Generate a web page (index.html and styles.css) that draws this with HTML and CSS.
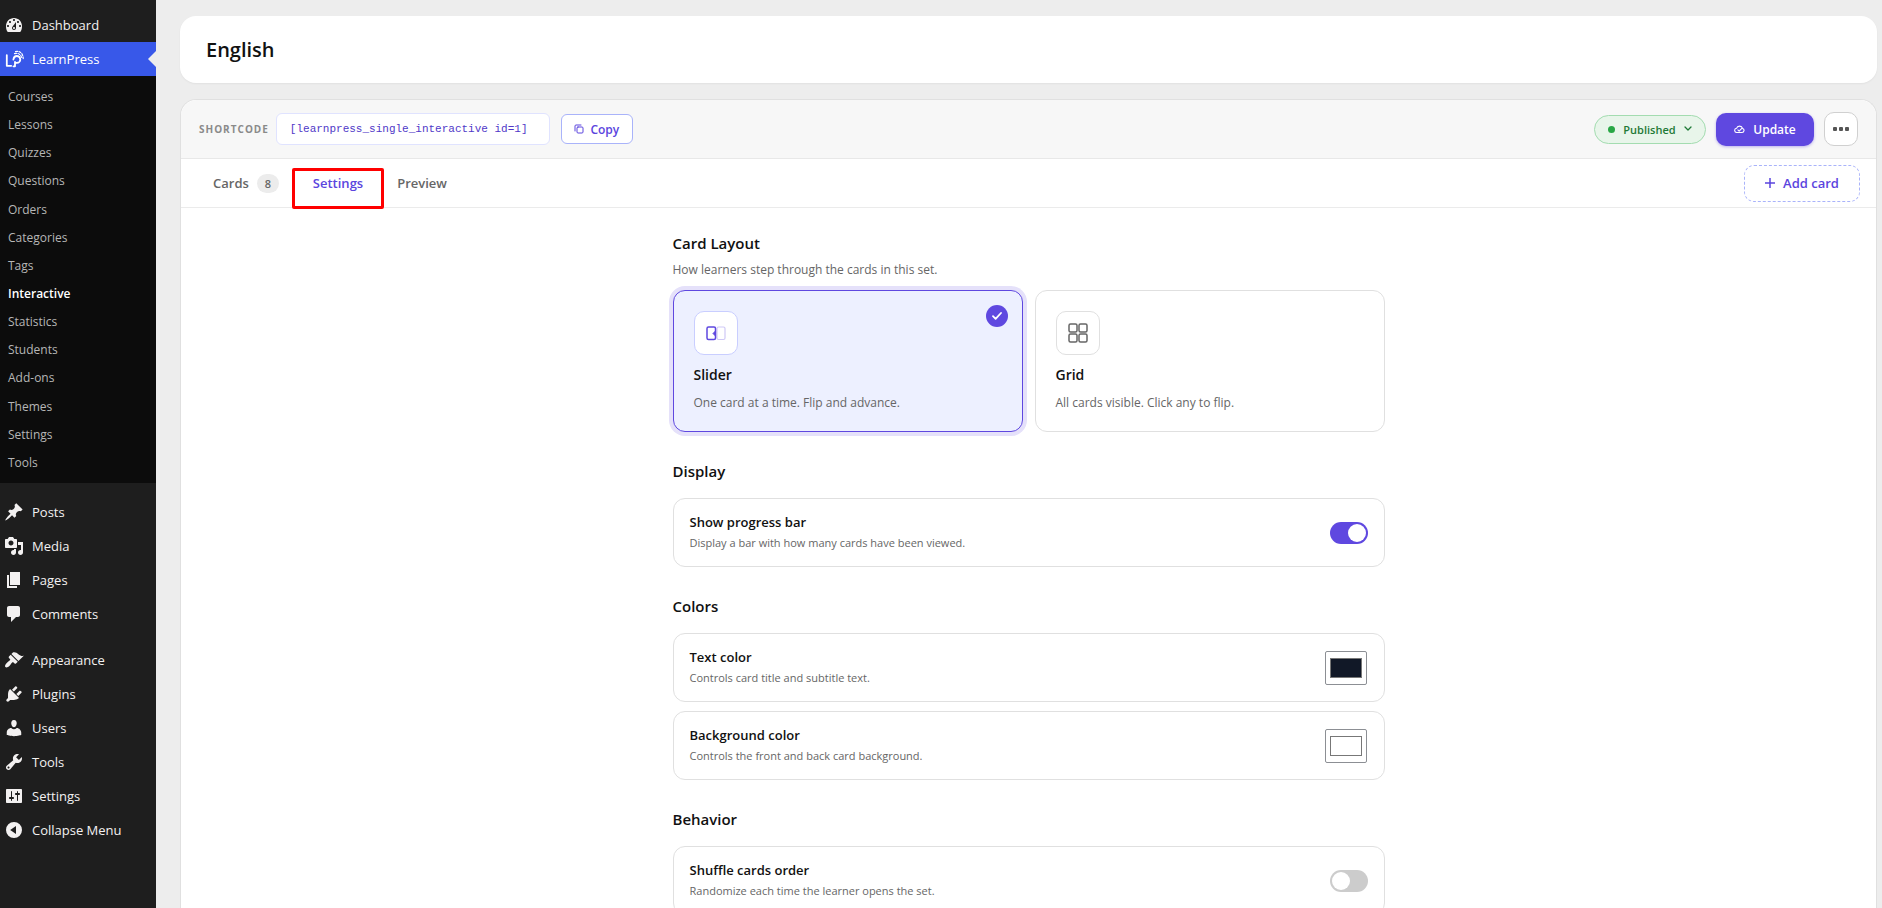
FILE: index.html
```html
<!DOCTYPE html>
<html lang="en">
<head>
    <meta charset="UTF-8">
    <meta name="viewport" content="width=device-width, initial-scale=1.0">
    <title>English - Interactive</title>
    <link rel="stylesheet" href="styles.css">
</head>
<body>
    <nav class="sidebar">
        <a class="menu-item" href="#">
            <svg class="menu-icon" viewBox="0 0 20 20"><path fill-rule="evenodd" d="M3.76 17h12.48c1.34-1.63 1.76-3.45 1.76-6 0-4.41-3.58-8-8-8s-8 3.59-8 8c0 2.55.42 4.37 1.76 6zM10 4c.55 0 1 .45 1 1s-.45 1-1 1-1-.45-1-1 .45-1 1-1zM6 6c.55 0 1 .45 1 1s-.45 1-1 1-1-.45-1-1 .45-1 1-1zm8 0c.55 0 1 .45 1 1s-.45 1-1 1-1-.45-1-1 .45-1 1-1zm-5.37 5.55L12 7v6c0 1.1-.9 2-2 2s-2-.9-2-2c0-.57.24-1.08.63-1.45zM4 10c.55 0 1 .45 1 1s-.45 1-1 1-1-.45-1-1 .45-1 1-1zm12 0c.55 0 1 .45 1 1s-.45 1-1 1-1-.45-1-1 .45-1 1-1zm-5 3c0-.55-.45-1-1-1s-1 .45-1 1 .45 1 1 1 1-.45 1-1z"/></svg>
            Dashboard
        </a>
        <a class="menu-item current" href="#">
            <svg class="menu-icon line" viewBox="0 0 20 20"><path stroke-width="1.800" d="M2.800 6.200v10.600h4.400M9.400 17.300h1.600V13M9.400 10.500c.3-2.200 1.600-3.500 3.500-3.500a3.400 3.400 0 0 1 0 6.800H11"/><path stroke-width="1.200" stroke-dasharray="2 1.500" d="M10.500 4.600c3-1 6.400.4 7.300 4.400M11.500 2.600c4-1 7.700 1.600 7.700 7"/></svg>
            LearnPress
        </a>
        <ul class="submenu">
            <li><a href="#">Courses</a></li>
            <li><a href="#">Lessons</a></li>
            <li><a href="#">Quizzes</a></li>
            <li><a href="#">Questions</a></li>
            <li><a href="#">Orders</a></li>
            <li><a href="#">Categories</a></li>
            <li><a href="#">Tags</a></li>
            <li><a class="active" href="#">Interactive</a></li>
            <li><a href="#">Statistics</a></li>
            <li><a href="#">Students</a></li>
            <li><a href="#">Add-ons</a></li>
            <li><a href="#">Themes</a></li>
            <li><a href="#">Settings</a></li>
            <li><a href="#">Tools</a></li>
        </ul>
        <div class="menu-group">
            <a class="menu-item" href="#">
                <svg class="menu-icon" viewBox="0 0 20 20"><path d="M10.440 3.020l1.820-1.820 6.360 6.350-1.830 1.820c-1.050-.68-2.480-.57-3.410.36l-.75.75c-.92.93-1.040 2.350-.35 3.410l-1.830 1.820-2.410-2.410-2.800 2.790c-.42.42-3.380 2.710-3.800 2.290s1.860-3.390 2.280-3.810l2.790-2.790L4.100 9.360l1.830-1.820c1.050.69 2.480.57 3.400-.36l.75-.75c.93-.92 1.050-2.350.36-3.410z"/></svg>
                Posts
            </a>
            <a class="menu-item" href="#">
                <svg class="menu-icon" viewBox="0 0 20 20"><path fill-rule="evenodd" d="M13 11V4c0-.55-.45-1-1-1h-1.670L9 1H5L3.670 3H2c-.55 0-1 .45-1 1v7c0 .55.45 1 1 1h10c.55 0 1-.45 1-1zM7 4.500c1.380 0 2.500 1.120 2.500 2.500S8.380 9.500 7 9.500 4.500 8.380 4.500 7 5.620 4.500 7 4.500zM14 6h5v10.500c0 1.380-1.120 2.500-2.500 2.500S14 17.880 14 16.500s1.120-2.500 2.500-2.500c.17 0 .34.02.5.05V9h-3V6zm-4 8.050V13h2v3.500c0 1.380-1.120 2.500-2.500 2.500S7 17.880 7 16.500 8.120 14 9.500 14c.17 0 .34.02.5.05z"/></svg>
                Media
            </a>
            <a class="menu-item" href="#">
                <svg class="menu-icon" viewBox="0 0 20 20"><path d="M6 15V2h10v13H6zm-1 1h8v2H3V5h2v11z"/></svg>
                Pages
            </a>
            <a class="menu-item" href="#">
                <svg class="menu-icon" viewBox="0 0 20 20"><path d="M5 2h9c1.100 0 2 .9 2 2v7c0 1.100-.9 2-2 2h-2l-5 5v-5H5c-1.100 0-2-.9-2-2V4c0-1.100.9-2 2-2z"/></svg>
                Comments
            </a>
        </div>
        <div class="menu-group">
            <a class="menu-item" href="#">
                <svg class="menu-icon" viewBox="0 0 20 20"><path d="M14.480 11.060L7.410 3.990l1.500-1.500c.5-.56 2.300-.47 3.510.32 1.210.8 1.430 1.280 2.910 2.100 1.180.64 2.450 1.260 4.450.85zm-.71.71L6.700 4.700 4.930 6.470c-.39.39-.39 1.020 0 1.410l1.060 1.060c.39.39.39 1.030 0 1.420-.6.6-1.430 1.110-2.210 1.690-.35.26-.7.53-1.010.84C1.430 14.230.4 16.080 1.400 17.070c.99 1 2.840-.03 4.180-1.360.31-.31.58-.66.85-1.020.57-.78 1.080-1.610 1.690-2.210.39-.39 1.020-.39 1.410 0l1.060 1.060c.39.39 1.020.39 1.410 0z"/></svg>
                Appearance
            </a>
            <a class="menu-item" href="#">
                <svg class="menu-icon" viewBox="0 0 20 20"><path d="M13.110 4.360L9.870 7.600 8 5.730l3.240-3.240c.35-.34 1.050-.2 1.560.32.52.51.66 1.210.31 1.550zm-8 1.770l.91-1.120 9.010 9.010-1.190.84c-.71.71-2.630 1.160-3.820 1.160H6.140L4.900 17.260c-.59.59-1.540.59-2.120 0-.59-.58-.59-1.530 0-2.120l1.240-1.240v-3.880c0-1.130.4-3.190 1.090-3.890zm7.260 3.970l3.240-3.240c.34-.35 1.040-.21 1.550.31.52.51.66 1.210.31 1.550l-3.240 3.250z"/></svg>
                Plugins
            </a>
            <a class="menu-item" href="#">
                <svg class="menu-icon" viewBox="0 0 20 20"><path d="M10 9.250c-2.270 0-2.730-3.440-2.730-3.440C7 4.020 7.820 2 9.970 2c2.160 0 2.980 2.020 2.710 3.810 0 0-.41 3.440-2.680 3.440zM7.230 10.050Q10 12.600 12.720 10c2.390 0 4.520 2.330 4.520 4.530v2.490s-3.650 1.130-7.240 1.130c-3.650 0-7.240-1.130-7.240-1.130v-2.490c0-2.250 1.940-4.480 4.470-4.480z"/></svg>
                Users
            </a>
            <a class="menu-item" href="#">
                <svg class="menu-icon" viewBox="0 0 20 20"><path fill-rule="evenodd" d="M16.680 9.770c-1.340 1.340-3.300 1.670-4.950.99l-5.410 6.520c-.99.99-2.590.99-3.580 0s-.99-2.590 0-3.570l6.520-5.420c-.68-1.650-.35-3.610.99-4.950 1.280-1.280 3.120-1.620 4.720-1.060l-2.890 2.890 2.820 2.820 2.860-2.870c.53 1.580.18 3.390-1.080 4.650zM3.810 16.210c.4.39 1.040.39 1.430 0 .4-.4.4-1.040 0-1.430-.39-.4-1.030-.4-1.430 0-.39.39-.39 1.030 0 1.430z"/></svg>
                Tools
            </a>
            <a class="menu-item" href="#">
                <svg class="menu-icon" viewBox="0 0 20 20"><path fill-rule="evenodd" d="M18 16V4c0-.55-.45-1-1-1H3c-.55 0-1 .45-1 1v12c0 .55.45 1 1 1h14c.55 0 1-.45 1-1zM8 11h1c.55 0 1 .45 1 1s-.45 1-1 1H8v1.500c0 .28-.22.5-.5.5s-.5-.22-.5-.5V13H6c-.55 0-1-.45-1-1s.45-1 1-1h1V5.500c0-.28.22-.5.5-.5s.5.22.5.5V11zm5-2h-1c-.55 0-1-.45-1-1s.45-1 1-1h1V5.500c0-.28.22-.5.5-.5s.5.22.5.5V7h1c.55 0 1 .45 1 1s-.45 1-1 1h-1v5.500c0 .28-.22.5-.5.5s-.5-.22-.5-.5V9z"/></svg>
                Settings
            </a>
            <button class="menu-item collapse" type="button">
                <svg class="menu-icon" viewBox="0 0 20 20"><path fill-rule="evenodd" d="M10 2a8 8 0 1 1 0 16 8 8 0 0 1 0-16zm2 11.900V6.100L6.200 10z"/></svg>
                Collapse Menu
            </button>
        </div>
    </nav>

    <main class="main">
        <header class="title-card">
            <h1>English</h1>
        </header>

        <section class="panel">
            <div class="toolbar">
                <span class="shortcode-label">SHORTCODE</span>
                <code class="shortcode">[learnpress_single_interactive id=1]</code>
                <button class="btn btn-copy" type="button">
                    <svg width="10" height="10" viewBox="0 0 10 10" class="line"><rect x="3" y="3" width="6" height="6" rx="1"/><path d="M1 7V2a1 1 0 0 1 1-1h5"/></svg>
                    Copy
                </button>
                <div class="toolbar-actions">
                    <button class="btn btn-status" type="button">
                        <span class="dot"></span>
                        Published
                        <svg width="8" height="6" viewBox="0 0 8 6" class="line"><path stroke-width="1.300" d="M1 1l3 3 3-3"/></svg>
                    </button>
                    <button class="btn btn-update" type="button">
                        <svg width="11" height="9" viewBox="0 0 12 10" class="line"><path stroke-width="1.200" d="M3.200 8.300h5.600a2.300 2.300 0 0 0 .6-4.500A3.500 3.500 0 0 0 2.700 3.700 2.300 2.300 0 0 0 3.200 8.300zM4.200 5.500l1.400 1.300 2.700-2.900"/></svg>
                        Update
                    </button>
                    <button class="btn btn-more" type="button" aria-label="More actions">
                        <svg width="16" height="4" viewBox="0 0 16 4"><rect x="0" width="4" height="4" rx="1"/><rect x="6" width="4" height="4" rx="1"/><rect x="12" width="4" height="4" rx="1"/></svg>
                    </button>
                </div>
            </div>

            <div class="tabs">
                <button class="tab" type="button">Cards <span class="count">8</span></button>
                <button class="tab tab-active" type="button">Settings</button>
                <button class="tab" type="button">Preview</button>
                <button class="btn btn-add" type="button">
                    <svg width="10" height="10" viewBox="0 0 10 10" class="line"><path stroke-width="1.500" d="M5 0v10M0 5h10"/></svg>
                    Add card
                </button>
            </div>

            <div class="settings">
                <section>
                    <h2>Card Layout</h2>
                    <p class="hint">How learners step through the cards in this set.</p>
                    <div class="layouts">
                        <button class="layout selected" type="button">
                            <span class="layout-icon">
                                <svg width="20" height="20" viewBox="0 0 20 20" class="line"><rect x="1" y="4" width="8.500" height="12.500" rx="1.500" stroke-width="1.500"/><rect x="11" y="4" width="8" height="12.500" rx="1.500" stroke-width="1.200" opacity=".3"/><path d="M9 8.500L7 10.500l2 2z" fill="currentColor" stroke-width="1"/></svg>
                            </span>
                            <span class="layout-name">Slider</span>
                            <span class="layout-desc">One card at a time. Flip and advance.</span>
                            <span class="check">
                                <svg width="10" height="8" viewBox="0 0 10 8" class="line"><path stroke-width="1.800" d="M1 4.200l2.600 2.600L9 1"/></svg>
                            </span>
                        </button>
                        <button class="layout" type="button">
                            <span class="layout-icon">
                                <svg width="20" height="20" viewBox="0 0 20 20" class="line"><g stroke-width="1.500"><rect x="1" y="1" width="8" height="8" rx="1.500"/><rect x="11" y="1" width="8" height="8" rx="1.500"/><rect x="1" y="11" width="8" height="8" rx="1.500"/><rect x="11" y="11" width="8" height="8" rx="1.500"/></g></svg>
                            </span>
                            <span class="layout-name">Grid</span>
                            <span class="layout-desc">All cards visible. Click any to flip.</span>
                        </button>
                    </div>
                </section>

                <section>
                    <h2>Display</h2>
                    <div class="rows">
                        <label class="row">
                            <span class="row-text">
                                <span class="row-title">Show progress bar</span>
                                <span class="row-desc">Display a bar with how many cards have been viewed.</span>
                            </span>
                            <input class="toggle" type="checkbox" checked>
                        </label>
                    </div>
                </section>

                <section>
                    <h2>Colors</h2>
                    <div class="rows">
                        <label class="row">
                            <span class="row-text">
                                <span class="row-title">Text color</span>
                                <span class="row-desc">Controls card title and subtitle text.</span>
                            </span>
                            <input class="color" type="color" value="#111827">
                        </label>
                        <label class="row">
                            <span class="row-text">
                                <span class="row-title">Background color</span>
                                <span class="row-desc">Controls the front and back card background.</span>
                            </span>
                            <input class="color" type="color" value="#ffffff">
                        </label>
                    </div>
                </section>

                <section>
                    <h2>Behavior</h2>
                    <div class="rows">
                        <label class="row">
                            <span class="row-text">
                                <span class="row-title">Shuffle cards order</span>
                                <span class="row-desc">Randomize each time the learner opens the set.</span>
                            </span>
                            <input class="toggle" type="checkbox">
                        </label>
                    </div>
                </section>
            </div>
        </section>
    </main>
</body>
</html>
```
FILE: styles.css
```css
* {
    box-sizing: border-box;
}

body {
    margin: 0;
    display: flex;
    height: 100vh;
    overflow: hidden;
    background: #ededed;
    font-family: "Segoe UI", "Open Sans", "Noto Sans", sans-serif;
    font-size: 13px;
    color: #111;
}

button {
    font-family: inherit;
    cursor: pointer;
}

h1,
h2,
p,
ul {
    margin: 0;
    padding: 0;
}

.line {
    fill: none;
    stroke: currentColor;
    stroke-linecap: round;
    stroke-linejoin: round;
}

/* Sidebar */
.sidebar {
    flex: 0 0 156px;
    padding-top: 8px;
    background: #1e1e1e;
}

.menu-item {
    position: relative;
    display: flex;
    align-items: center;
    gap: 8px;
    width: 100%;
    height: 34px;
    padding: 0 4px;
    border: none;
    background: none;
    color: #f3f1f1;
    font-size: 13px;
    text-decoration: none;
}

.menu-icon {
    width: 20px;
    height: 20px;
    fill: currentColor;
}

.menu-icon.line {
    fill: none;
}

.menu-item.current {
    background: #3858e9;
    color: #fff;
}

.menu-item.current::after {
    content: "";
    position: absolute;
    right: 0;
    top: 9px;
    border: 8px solid transparent;
    border-right-color: #ededed;
    border-left: none;
}

.menu-group {
    margin-top: 12px;
}

.submenu {
    display: flex;
    flex-direction: column;
    justify-content: space-between;
    min-height: 407px;
    padding: 7px 0 6px;
    background: #0c0c0c;
    list-style: none;
}

.submenu a {
    display: block;
    padding-left: 8px;
    color: #b6b6b6;
    font-size: 12px;
    line-height: 28px;
    text-decoration: none;
}

.submenu .active {
    color: #fff;
    font-weight: 600;
}

/* Main column */
.main {
    flex: 1;
    display: flex;
    flex-direction: column;
    gap: 16px;
    padding: 16px 5px 0 24px;
}

.title-card {
    padding: 18px 26px;
    border-radius: 16px;
    background: #fff;
    box-shadow: 0 1px 2px rgba(0, 0, 0, 0.05);
}

.title-card h1 {
    font-size: 20px;
    font-weight: 600;
    line-height: 31px;
}

.panel {
    flex: 1;
    border: 1px solid #e0e0e0;
    border-bottom: none;
    border-radius: 16px 16px 0 0;
    background: #fff;
}

.toolbar {
    display: flex;
    align-items: center;
    height: 59px;
    padding: 0 18px;
    border-bottom: 1px solid #e8e8e8;
    border-radius: 16px 16px 0 0;
    background: #f7f7f7;
}

.shortcode-label {
    margin-right: 7px;
    color: #8a8a8a;
    font-size: 10px;
    font-weight: 700;
    letter-spacing: 1px;
}

.shortcode {
    min-width: 274px;
    margin-right: 11px;
    padding: 0 13px;
    border: 1px solid #e0e3ff;
    border-radius: 6px;
    background: #fff;
    color: #5038c8;
    font-family: Consolas, "Liberation Mono", monospace;
    font-size: 11px;
    line-height: 30px;
}

.btn {
    display: flex;
    align-items: center;
    justify-content: center;
    gap: 6px;
    padding: 0;
    border: 1px solid transparent;
    border-radius: 6px;
    background: #fff;
    color: #5b45de;
    font-size: 13px;
    font-weight: 600;
}

.btn-copy {
    width: 72px;
    height: 30px;
    border-color: #a9b3fa;
    font-size: 12px;
}

.toolbar-actions {
    display: flex;
    align-items: center;
    gap: 10px;
    margin-left: auto;
}

.btn-status {
    gap: 8px;
    width: 112px;
    height: 29px;
    border-color: #a3dcb0;
    border-radius: 15px;
    background: #e8f5ea;
    color: #1f7a37;
    font-size: 11px;
}

.dot {
    width: 7px;
    height: 7px;
    border-radius: 50%;
    background: #28a745;
}

.btn-update {
    gap: 8px;
    width: 98px;
    height: 33px;
    border-radius: 10px;
    background: #5f48e0;
    color: #fff;
    font-size: 12px;
    box-shadow: 0 1px 3px rgba(95, 72, 224, 0.4);
}

.btn-more {
    width: 34px;
    height: 34px;
    border-color: #d0d0d0;
    border-radius: 10px;
    color: #555;
    fill: currentColor;
}

/* Tabs */
.tabs {
    display: flex;
    align-items: center;
    gap: 2px;
    height: 49px;
    padding: 0 16px;
    border-bottom: 1px solid #ebebeb;
}

.tab {
    position: relative;
    display: flex;
    align-items: center;
    gap: 8px;
    height: 48px;
    padding: 0 16px;
    border: none;
    background: none;
    color: #666;
    font-size: 13px;
    font-weight: 600;
}

.tab-active {
    color: #5b45de;
}

/* Highlight frame round the open tab */
.tab-active::after {
    content: "";
    position: absolute;
    inset: 9px -5px -2px;
    border: 3px solid #f00;
    border-radius: 2px;
}

.count {
    width: 22px;
    border-radius: 10px;
    background: #ececec;
    font-size: 11px;
    line-height: 19px;
}

.btn-add {
    gap: 8px;
    width: 116px;
    height: 37px;
    margin-left: auto;
    border: 1px dashed #a9b3fa;
    border-radius: 10px;
}

/* Settings form */
.settings {
    display: flex;
    flex-direction: column;
    gap: 29px;
    max-width: 712px;
    margin: 0 auto;
    padding: 25px 0;
}

.settings h2 {
    margin-bottom: 17px;
    font-size: 15px;
    font-weight: 600;
    line-height: 20px;
}

.settings .hint {
    margin: -10px 0 10px;
    color: #666;
    font-size: 12px;
    line-height: 20px;
}

.layouts {
    display: grid;
    grid-template-columns: 1fr 1fr;
    gap: 12px;
}

.layout {
    position: relative;
    display: flex;
    flex-direction: column;
    align-items: flex-start;
    height: 142px;
    padding: 20px 20px 16px;
    border: 1px solid #e0e0e0;
    border-radius: 12px;
    background: #fff;
    color: #111;
}

.layout.selected {
    border-color: #5f48e0;
    background: #edf0ff;
    box-shadow: 0 0 0 4px #e5e1fa;
}

.layout-icon {
    flex: none;
    display: flex;
    align-items: center;
    justify-content: center;
    width: 44px;
    height: 44px;
    border: 1px solid #e0e0e0;
    border-radius: 10px;
    background: #fff;
    color: #666;
}

.selected .layout-icon {
    border-color: #c9ceff;
    color: #5f48e0;
}

.layout-name {
    margin-top: 10px;
    font-size: 14px;
    font-weight: 600;
    line-height: 20px;
}

.layout-desc {
    margin-top: 8px;
    color: #666;
    font-size: 12px;
    line-height: 20px;
}

.check {
    position: absolute;
    top: 14px;
    right: 14px;
    display: flex;
    align-items: center;
    justify-content: center;
    width: 22px;
    height: 22px;
    border-radius: 50%;
    background: #5f48e0;
    color: #fff;
}

.rows {
    display: flex;
    flex-direction: column;
    gap: 9px;
}

.row {
    display: flex;
    align-items: center;
    justify-content: space-between;
    height: 69px;
    padding: 0 16px;
    border: 1px solid #e0e0e0;
    border-radius: 12px;
}

.row-text {
    display: flex;
    flex-direction: column;
    gap: 1px;
}

.row-title {
    font-size: 13px;
    font-weight: 600;
    line-height: 20px;
}

.row-desc {
    color: #666;
    font-size: 11px;
    line-height: 20px;
}

.toggle {
    appearance: none;
    width: 38px;
    height: 22px;
    margin: 0;
    padding: 2px;
    border-radius: 11px;
    background: #ccc;
}

.toggle::before {
    content: "";
    display: block;
    width: 18px;
    height: 18px;
    border-radius: 50%;
    background: #fff;
}

.toggle:checked {
    background: #5f48e0;
}

.toggle:checked::before {
    margin-left: auto;
}

.color {
    width: 42px;
    height: 34px;
    margin: 0 1px 0 0;
    padding: 2px;
    border: 1px solid #8c8f94;
    border-radius: 2px;
    background: #fff;
}
```
